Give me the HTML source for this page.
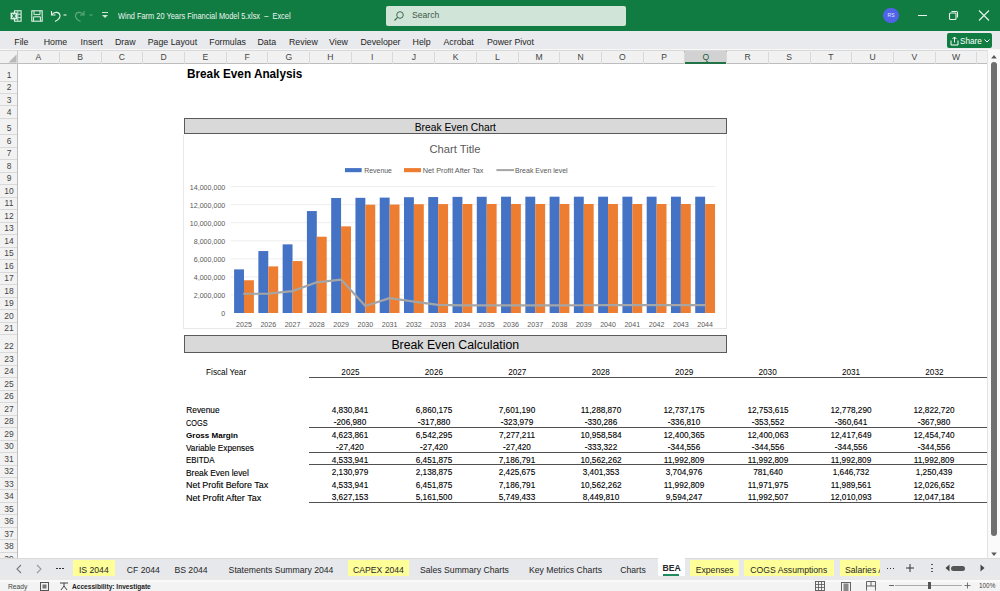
<!DOCTYPE html>
<html><head><meta charset="utf-8"><style>
html,body{margin:0;padding:0;width:1000px;height:591px;overflow:hidden;background:#fff}
body{position:relative;font-family:"Liberation Sans", sans-serif}
.b{position:absolute;display:block}
.t{position:absolute;white-space:nowrap;font-family:"Liberation Sans", sans-serif}
.sk{-webkit-text-stroke:0.12px currentColor}
</style></head><body>
<div class="b" style="left:0.00px;top:0.00px;width:1000.00px;height:31.00px;background:#107c41"></div>
<svg class="b" style="left:10px;top:9.8px" width="12" height="12" viewBox="0 0 12 12">
<rect x="4.5" y="0.8" width="6.6" height="10.4" fill="none" stroke="#dff0e5" stroke-width="1.1"/>
<line x1="7.8" y1="0.8" x2="7.8" y2="11.2" stroke="#dff0e5" stroke-width="0.9"/>
<line x1="7.8" y1="4.2" x2="11" y2="4.2" stroke="#dff0e5" stroke-width="0.9"/>
<line x1="7.8" y1="7.6" x2="11" y2="7.6" stroke="#dff0e5" stroke-width="0.9"/>
<rect x="0.6" y="2.6" width="6.6" height="6.8" fill="#dff0e5"/>
<path d="M2.4 4.2 L5.4 7.8 M5.4 4.2 L2.4 7.8" stroke="#137b45" stroke-width="1.1"/>
</svg>
<svg class="b" style="left:30.8px;top:9.6px" width="12" height="12" viewBox="0 0 12 12">
<rect x="0.8" y="0.8" width="10.4" height="10.4" fill="none" stroke="#dff0e5" stroke-width="1.1"/>
<path d="M3 0.8 V4.6 H9 V0.8" fill="none" stroke="#dff0e5" stroke-width="1"/>
<path d="M2.6 11.2 V6.8 H9.4 V11.2" fill="none" stroke="#dff0e5" stroke-width="1"/>
</svg>
<svg class="b" style="left:49px;top:9px" width="20" height="14" viewBox="0 0 20 14">
<path d="M2.5 2 L2.5 6 L6.5 6" fill="none" stroke="#e8f3ec" stroke-width="1.1"/>
<path d="M2.8 5.8 C5 2.5 10.5 2.5 11 6.5 C11.3 9 9 11 6 12.5" fill="none" stroke="#e8f3ec" stroke-width="1.1"/>
<line x1="14.5" y1="6" x2="17.5" y2="6" stroke="#e8f3ec" stroke-width="1.1"/>
</svg>
<svg class="b" style="left:74px;top:9px" width="22" height="14" viewBox="0 0 22 14">
<path d="M10 2 L10 6 L6 6" fill="none" stroke="#5fa97f" stroke-width="1.1"/>
<path d="M9.7 5.8 C7.5 2.5 2 2.5 1.5 6.5 C1.2 9 3.5 11 6.5 12.5" fill="none" stroke="#5fa97f" stroke-width="1.1"/>
<line x1="15.5" y1="6" x2="18.5" y2="6" stroke="#5fa97f" stroke-width="1.1"/>
</svg>
<svg class="b" style="left:100px;top:10px" width="10" height="10" viewBox="0 0 10 10">
<line x1="2" y1="2.5" x2="8" y2="2.5" stroke="#cfe5d8" stroke-width="1"/>
<path d="M2 5 L8 5 L5 8 Z" fill="#cfe5d8"/>
</svg>
<div class="t " style="left:117.50px;top:9.40px;height:16.40px;line-height:16.40px;font-size:8.20px;color:#eef6f1;font-weight:normal;transform:scaleX(0.905);transform-origin:left center;">Wind Farm 20 Years Financial Model 5.xlsx&nbsp;&nbsp;&ndash;&nbsp;&nbsp;Excel</div>
<div class="b" style="left:385.50px;top:5.70px;width:240.00px;height:20.30px;background:#d1e4d8;border-radius:2px"></div>
<svg class="b" style="left:393px;top:9.5px" width="12" height="12" viewBox="0 0 12 12">
<circle cx="7" cy="5" r="3.3" fill="none" stroke="#3d6a50" stroke-width="1"/>
<line x1="4.6" y1="7.4" x2="1.5" y2="10.5" stroke="#3d6a50" stroke-width="1.1"/>
</svg>
<div class="t " style="left:412.00px;top:6.90px;height:17.20px;line-height:17.20px;font-size:8.60px;color:#3d5a48;font-weight:normal;">Search</div>
<div class="b" style="left:883.2px;top:7.5px;width:15.6px;height:15.6px;border-radius:50%;background:#4f62e8"></div>
<div class="t " style="left:691.00px;width:400px;text-align:center;top:10.30px;height:10.00px;line-height:10.00px;font-size:5.00px;color:#e8ebff;font-weight:normal;">RS</div>
<div class="b" style="left:918.00px;top:14.80px;width:8.50px;height:1.00px;background:#e8f3ec"></div>
<svg class="b" style="left:948px;top:10px" width="11" height="11" viewBox="0 0 11 11">
<rect x="1.5" y="3" width="6.5" height="6.5" rx="1" fill="none" stroke="#e8f3ec" stroke-width="1.1"/>
<path d="M3.5 1.5 L8.5 1.5 Q9.5 1.5 9.5 2.5 L9.5 7.5" fill="none" stroke="#e8f3ec" stroke-width="1.1"/>
</svg>
<svg class="b" style="left:978px;top:10px" width="12" height="11" viewBox="0 0 12 11">
<path d="M1 0.5 L11 10.5 M11 0.5 L1 10.5" stroke="#e8f3ec" stroke-width="1.1"/>
</svg>
<div class="b" style="left:0.00px;top:31.00px;width:1000.00px;height:17.50px;background:#e8eaed"></div>
<div class="b" style="left:0.00px;top:48.50px;width:1000.00px;height:2.00px;background:#f7f7f8"></div>
<div class="t" style="left:14.30px;top:33.7px;height:17px;line-height:17px;font-size:8.8px;color:#262626">File</div>
<div class="t" style="left:43.70px;top:33.7px;height:17px;line-height:17px;font-size:8.8px;color:#262626">Home</div>
<div class="t" style="left:80.60px;top:33.7px;height:17px;line-height:17px;font-size:8.8px;color:#262626">Insert</div>
<div class="t" style="left:115.00px;top:33.7px;height:17px;line-height:17px;font-size:8.8px;color:#262626">Draw</div>
<div class="t" style="left:147.70px;top:33.7px;height:17px;line-height:17px;font-size:8.8px;color:#262626">Page Layout</div>
<div class="t" style="left:209.30px;top:33.7px;height:17px;line-height:17px;font-size:8.8px;color:#262626">Formulas</div>
<div class="t" style="left:257.50px;top:33.7px;height:17px;line-height:17px;font-size:8.8px;color:#262626">Data</div>
<div class="t" style="left:289.00px;top:33.7px;height:17px;line-height:17px;font-size:8.8px;color:#262626">Review</div>
<div class="t" style="left:329.00px;top:33.7px;height:17px;line-height:17px;font-size:8.8px;color:#262626">View</div>
<div class="t" style="left:360.40px;top:33.7px;height:17px;line-height:17px;font-size:8.8px;color:#262626">Developer</div>
<div class="t" style="left:412.60px;top:33.7px;height:17px;line-height:17px;font-size:8.8px;color:#262626">Help</div>
<div class="t" style="left:443.50px;top:33.7px;height:17px;line-height:17px;font-size:8.8px;color:#262626">Acrobat</div>
<div class="t" style="left:487.00px;top:33.7px;height:17px;line-height:17px;font-size:8.8px;color:#262626">Power Pivot</div>
<div class="b" style="left:946.70px;top:33.30px;width:45.50px;height:14.40px;background:#107c41;border-radius:2px"></div>
<svg class="b" style="left:950px;top:36px" width="9" height="10" viewBox="0 0 9 10">
<path d="M1 4.5 L1 9 L8 9 L8 4.5" fill="none" stroke="#fff" stroke-width="1"/>
<path d="M4.5 6.5 L4.5 1 M2.5 3 L4.5 1 L6.5 3" fill="none" stroke="#fff" stroke-width="1"/>
</svg>
<div class="t " style="left:960.00px;top:34.10px;height:16.40px;line-height:16.40px;font-size:8.20px;color:#fff;font-weight:normal;">Share</div>
<svg class="b" style="left:984px;top:39px" width="6" height="4" viewBox="0 0 6 4">
<path d="M0.5 0.5 L3 3 L5.5 0.5" fill="none" stroke="#fff" stroke-width="1"/>
</svg>
<div class="b" style="left:0.00px;top:50.50px;width:1000.00px;height:13.00px;background:#f1f1f1"></div>
<div class="b" style="left:0.00px;top:50.30px;width:987.00px;height:0.80px;background:#d9d9d9"></div>
<div class="b" style="left:0.00px;top:63.00px;width:987.00px;height:0.80px;background:#bdbdbd"></div>
<div class="b" style="left:684.96px;top:51.10px;width:41.71px;height:12.40px;background:#d2d2d2"></div>
<div class="b" style="left:684.96px;top:62.20px;width:41.71px;height:1.50px;background:#217346"></div>
<div class="b" style="left:684.46px;top:51.10px;width:0.90px;height:12.40px;background:#a8a8a8"></div>
<div class="b" style="left:726.17px;top:51.10px;width:0.90px;height:12.40px;background:#a8a8a8"></div>
<div class="b" style="left:58.81px;top:52.00px;width:0.80px;height:11.50px;background:#d8d8d8"></div>
<div class="t " style="left:-161.55px;width:400px;text-align:center;top:49.00px;height:17.20px;line-height:17.20px;font-size:8.60px;color:#444;font-weight:normal;">A</div>
<div class="b" style="left:100.52px;top:52.00px;width:0.80px;height:11.50px;background:#d8d8d8"></div>
<div class="t " style="left:-119.83px;width:400px;text-align:center;top:49.00px;height:17.20px;line-height:17.20px;font-size:8.60px;color:#444;font-weight:normal;">B</div>
<div class="b" style="left:142.23px;top:52.00px;width:0.80px;height:11.50px;background:#d8d8d8"></div>
<div class="t " style="left:-78.12px;width:400px;text-align:center;top:49.00px;height:17.20px;line-height:17.20px;font-size:8.60px;color:#444;font-weight:normal;">C</div>
<div class="b" style="left:183.94px;top:52.00px;width:0.80px;height:11.50px;background:#d8d8d8"></div>
<div class="t " style="left:-36.42px;width:400px;text-align:center;top:49.00px;height:17.20px;line-height:17.20px;font-size:8.60px;color:#444;font-weight:normal;">D</div>
<div class="b" style="left:225.65px;top:52.00px;width:0.80px;height:11.50px;background:#d8d8d8"></div>
<div class="t " style="left:5.29px;width:400px;text-align:center;top:49.00px;height:17.20px;line-height:17.20px;font-size:8.60px;color:#444;font-weight:normal;">E</div>
<div class="b" style="left:267.36px;top:52.00px;width:0.80px;height:11.50px;background:#d8d8d8"></div>
<div class="t " style="left:47.00px;width:400px;text-align:center;top:49.00px;height:17.20px;line-height:17.20px;font-size:8.60px;color:#444;font-weight:normal;">F</div>
<div class="b" style="left:309.07px;top:52.00px;width:0.80px;height:11.50px;background:#d8d8d8"></div>
<div class="t " style="left:88.72px;width:400px;text-align:center;top:49.00px;height:17.20px;line-height:17.20px;font-size:8.60px;color:#444;font-weight:normal;">G</div>
<div class="b" style="left:350.78px;top:52.00px;width:0.80px;height:11.50px;background:#d8d8d8"></div>
<div class="t " style="left:130.43px;width:400px;text-align:center;top:49.00px;height:17.20px;line-height:17.20px;font-size:8.60px;color:#444;font-weight:normal;">H</div>
<div class="b" style="left:392.49px;top:52.00px;width:0.80px;height:11.50px;background:#d8d8d8"></div>
<div class="t " style="left:172.14px;width:400px;text-align:center;top:49.00px;height:17.20px;line-height:17.20px;font-size:8.60px;color:#444;font-weight:normal;">I</div>
<div class="b" style="left:434.20px;top:52.00px;width:0.80px;height:11.50px;background:#d8d8d8"></div>
<div class="t " style="left:213.85px;width:400px;text-align:center;top:49.00px;height:17.20px;line-height:17.20px;font-size:8.60px;color:#444;font-weight:normal;">J</div>
<div class="b" style="left:475.91px;top:52.00px;width:0.80px;height:11.50px;background:#d8d8d8"></div>
<div class="t " style="left:255.56px;width:400px;text-align:center;top:49.00px;height:17.20px;line-height:17.20px;font-size:8.60px;color:#444;font-weight:normal;">K</div>
<div class="b" style="left:517.62px;top:52.00px;width:0.80px;height:11.50px;background:#d8d8d8"></div>
<div class="t " style="left:297.27px;width:400px;text-align:center;top:49.00px;height:17.20px;line-height:17.20px;font-size:8.60px;color:#444;font-weight:normal;">L</div>
<div class="b" style="left:559.33px;top:52.00px;width:0.80px;height:11.50px;background:#d8d8d8"></div>
<div class="t " style="left:338.98px;width:400px;text-align:center;top:49.00px;height:17.20px;line-height:17.20px;font-size:8.60px;color:#444;font-weight:normal;">M</div>
<div class="b" style="left:601.04px;top:52.00px;width:0.80px;height:11.50px;background:#d8d8d8"></div>
<div class="t " style="left:380.69px;width:400px;text-align:center;top:49.00px;height:17.20px;line-height:17.20px;font-size:8.60px;color:#444;font-weight:normal;">N</div>
<div class="b" style="left:642.75px;top:52.00px;width:0.80px;height:11.50px;background:#d8d8d8"></div>
<div class="t " style="left:422.40px;width:400px;text-align:center;top:49.00px;height:17.20px;line-height:17.20px;font-size:8.60px;color:#444;font-weight:normal;">O</div>
<div class="b" style="left:684.46px;top:52.00px;width:0.80px;height:11.50px;background:#d8d8d8"></div>
<div class="t " style="left:464.11px;width:400px;text-align:center;top:49.00px;height:17.20px;line-height:17.20px;font-size:8.60px;color:#444;font-weight:normal;">P</div>
<div class="b" style="left:726.17px;top:52.00px;width:0.80px;height:11.50px;background:#d8d8d8"></div>
<div class="t " style="left:505.82px;width:400px;text-align:center;top:49.00px;height:17.20px;line-height:17.20px;font-size:8.60px;color:#1f5c3a;font-weight:normal;">Q</div>
<div class="b" style="left:767.88px;top:52.00px;width:0.80px;height:11.50px;background:#d8d8d8"></div>
<div class="t " style="left:547.53px;width:400px;text-align:center;top:49.00px;height:17.20px;line-height:17.20px;font-size:8.60px;color:#444;font-weight:normal;">R</div>
<div class="b" style="left:809.59px;top:52.00px;width:0.80px;height:11.50px;background:#d8d8d8"></div>
<div class="t " style="left:589.24px;width:400px;text-align:center;top:49.00px;height:17.20px;line-height:17.20px;font-size:8.60px;color:#444;font-weight:normal;">S</div>
<div class="b" style="left:851.30px;top:52.00px;width:0.80px;height:11.50px;background:#d8d8d8"></div>
<div class="t " style="left:630.95px;width:400px;text-align:center;top:49.00px;height:17.20px;line-height:17.20px;font-size:8.60px;color:#444;font-weight:normal;">T</div>
<div class="b" style="left:893.01px;top:52.00px;width:0.80px;height:11.50px;background:#d8d8d8"></div>
<div class="t " style="left:672.66px;width:400px;text-align:center;top:49.00px;height:17.20px;line-height:17.20px;font-size:8.60px;color:#444;font-weight:normal;">U</div>
<div class="b" style="left:934.72px;top:52.00px;width:0.80px;height:11.50px;background:#d8d8d8"></div>
<div class="t " style="left:714.37px;width:400px;text-align:center;top:49.00px;height:17.20px;line-height:17.20px;font-size:8.60px;color:#444;font-weight:normal;">V</div>
<div class="b" style="left:976.43px;top:52.00px;width:0.80px;height:11.50px;background:#d8d8d8"></div>
<div class="t " style="left:756.08px;width:400px;text-align:center;top:49.00px;height:17.20px;line-height:17.20px;font-size:8.60px;color:#444;font-weight:normal;">W</div>
<div class="b" style="left:1018.14px;top:52.00px;width:0.80px;height:11.50px;background:#d8d8d8"></div>
<svg class="b" style="left:6.5px;top:53.5px" width="10" height="9" viewBox="0 0 10 9">
<path d="M9.5 0.5 L9.5 8.5 L1.5 8.5 Z" fill="#b8b8b8"/>
</svg>
<div class="b" style="left:17.20px;top:51.00px;width:0.80px;height:12.50px;background:#c8c8c8"></div>
<div class="b" style="left:0.00px;top:63.50px;width:17.60px;height:494.00px;background:#f2f2f2"></div>
<div class="b" style="left:17.20px;top:63.50px;width:0.80px;height:494.00px;background:#bdbdbd"></div>
<div class="b" style="left:0.00px;top:80.60px;width:17.20px;height:0.80px;background:#d9d9d9"></div>
<div class="t " style="left:-191.30px;width:400px;text-align:center;top:65.80px;height:18.80px;line-height:18.80px;font-size:9.40px;color:#444;font-weight:normal;transform:scaleX(0.9);transform-origin:center center;">1</div>
<div class="b" style="left:0.00px;top:93.00px;width:17.20px;height:0.80px;background:#d9d9d9"></div>
<div class="t " style="left:-191.30px;width:400px;text-align:center;top:78.20px;height:18.80px;line-height:18.80px;font-size:9.40px;color:#444;font-weight:normal;transform:scaleX(0.9);transform-origin:center center;">2</div>
<div class="b" style="left:0.00px;top:105.40px;width:17.20px;height:0.80px;background:#d9d9d9"></div>
<div class="t " style="left:-191.30px;width:400px;text-align:center;top:90.60px;height:18.80px;line-height:18.80px;font-size:9.40px;color:#444;font-weight:normal;transform:scaleX(0.9);transform-origin:center center;">3</div>
<div class="b" style="left:0.00px;top:117.80px;width:17.20px;height:0.80px;background:#d9d9d9"></div>
<div class="t " style="left:-191.30px;width:400px;text-align:center;top:103.00px;height:18.80px;line-height:18.80px;font-size:9.40px;color:#444;font-weight:normal;transform:scaleX(0.9);transform-origin:center center;">4</div>
<div class="b" style="left:0.00px;top:134.10px;width:17.20px;height:0.80px;background:#d9d9d9"></div>
<div class="t " style="left:-191.30px;width:400px;text-align:center;top:119.30px;height:18.80px;line-height:18.80px;font-size:9.40px;color:#444;font-weight:normal;transform:scaleX(0.9);transform-origin:center center;">5</div>
<div class="b" style="left:0.00px;top:146.60px;width:17.20px;height:0.80px;background:#d9d9d9"></div>
<div class="t " style="left:-191.30px;width:400px;text-align:center;top:131.80px;height:18.80px;line-height:18.80px;font-size:9.40px;color:#444;font-weight:normal;transform:scaleX(0.9);transform-origin:center center;">6</div>
<div class="b" style="left:0.00px;top:159.10px;width:17.20px;height:0.80px;background:#d9d9d9"></div>
<div class="t " style="left:-191.30px;width:400px;text-align:center;top:144.30px;height:18.80px;line-height:18.80px;font-size:9.40px;color:#444;font-weight:normal;transform:scaleX(0.9);transform-origin:center center;">7</div>
<div class="b" style="left:0.00px;top:171.60px;width:17.20px;height:0.80px;background:#d9d9d9"></div>
<div class="t " style="left:-191.30px;width:400px;text-align:center;top:156.80px;height:18.80px;line-height:18.80px;font-size:9.40px;color:#444;font-weight:normal;transform:scaleX(0.9);transform-origin:center center;">8</div>
<div class="b" style="left:0.00px;top:184.10px;width:17.20px;height:0.80px;background:#d9d9d9"></div>
<div class="t " style="left:-191.30px;width:400px;text-align:center;top:169.30px;height:18.80px;line-height:18.80px;font-size:9.40px;color:#444;font-weight:normal;transform:scaleX(0.9);transform-origin:center center;">9</div>
<div class="b" style="left:0.00px;top:196.60px;width:17.20px;height:0.80px;background:#d9d9d9"></div>
<div class="t " style="left:-191.30px;width:400px;text-align:center;top:181.80px;height:18.80px;line-height:18.80px;font-size:9.40px;color:#444;font-weight:normal;transform:scaleX(0.9);transform-origin:center center;">10</div>
<div class="b" style="left:0.00px;top:209.10px;width:17.20px;height:0.80px;background:#d9d9d9"></div>
<div class="t " style="left:-191.30px;width:400px;text-align:center;top:194.30px;height:18.80px;line-height:18.80px;font-size:9.40px;color:#444;font-weight:normal;transform:scaleX(0.9);transform-origin:center center;">11</div>
<div class="b" style="left:0.00px;top:221.60px;width:17.20px;height:0.80px;background:#d9d9d9"></div>
<div class="t " style="left:-191.30px;width:400px;text-align:center;top:206.80px;height:18.80px;line-height:18.80px;font-size:9.40px;color:#444;font-weight:normal;transform:scaleX(0.9);transform-origin:center center;">12</div>
<div class="b" style="left:0.00px;top:234.10px;width:17.20px;height:0.80px;background:#d9d9d9"></div>
<div class="t " style="left:-191.30px;width:400px;text-align:center;top:219.30px;height:18.80px;line-height:18.80px;font-size:9.40px;color:#444;font-weight:normal;transform:scaleX(0.9);transform-origin:center center;">13</div>
<div class="b" style="left:0.00px;top:246.60px;width:17.20px;height:0.80px;background:#d9d9d9"></div>
<div class="t " style="left:-191.30px;width:400px;text-align:center;top:231.80px;height:18.80px;line-height:18.80px;font-size:9.40px;color:#444;font-weight:normal;transform:scaleX(0.9);transform-origin:center center;">14</div>
<div class="b" style="left:0.00px;top:259.10px;width:17.20px;height:0.80px;background:#d9d9d9"></div>
<div class="t " style="left:-191.30px;width:400px;text-align:center;top:244.30px;height:18.80px;line-height:18.80px;font-size:9.40px;color:#444;font-weight:normal;transform:scaleX(0.9);transform-origin:center center;">15</div>
<div class="b" style="left:0.00px;top:271.60px;width:17.20px;height:0.80px;background:#d9d9d9"></div>
<div class="t " style="left:-191.30px;width:400px;text-align:center;top:256.80px;height:18.80px;line-height:18.80px;font-size:9.40px;color:#444;font-weight:normal;transform:scaleX(0.9);transform-origin:center center;">16</div>
<div class="b" style="left:0.00px;top:284.10px;width:17.20px;height:0.80px;background:#d9d9d9"></div>
<div class="t " style="left:-191.30px;width:400px;text-align:center;top:269.30px;height:18.80px;line-height:18.80px;font-size:9.40px;color:#444;font-weight:normal;transform:scaleX(0.9);transform-origin:center center;">17</div>
<div class="b" style="left:0.00px;top:296.60px;width:17.20px;height:0.80px;background:#d9d9d9"></div>
<div class="t " style="left:-191.30px;width:400px;text-align:center;top:281.80px;height:18.80px;line-height:18.80px;font-size:9.40px;color:#444;font-weight:normal;transform:scaleX(0.9);transform-origin:center center;">18</div>
<div class="b" style="left:0.00px;top:309.10px;width:17.20px;height:0.80px;background:#d9d9d9"></div>
<div class="t " style="left:-191.30px;width:400px;text-align:center;top:294.30px;height:18.80px;line-height:18.80px;font-size:9.40px;color:#444;font-weight:normal;transform:scaleX(0.9);transform-origin:center center;">19</div>
<div class="b" style="left:0.00px;top:321.60px;width:17.20px;height:0.80px;background:#d9d9d9"></div>
<div class="t " style="left:-191.30px;width:400px;text-align:center;top:306.80px;height:18.80px;line-height:18.80px;font-size:9.40px;color:#444;font-weight:normal;transform:scaleX(0.9);transform-origin:center center;">20</div>
<div class="b" style="left:0.00px;top:334.10px;width:17.20px;height:0.80px;background:#d9d9d9"></div>
<div class="t " style="left:-191.30px;width:400px;text-align:center;top:319.30px;height:18.80px;line-height:18.80px;font-size:9.40px;color:#444;font-weight:normal;transform:scaleX(0.9);transform-origin:center center;">21</div>
<div class="b" style="left:0.00px;top:352.10px;width:17.20px;height:0.80px;background:#d9d9d9"></div>
<div class="t " style="left:-191.30px;width:400px;text-align:center;top:337.30px;height:18.80px;line-height:18.80px;font-size:9.40px;color:#444;font-weight:normal;transform:scaleX(0.9);transform-origin:center center;">22</div>
<div class="b" style="left:0.00px;top:364.59px;width:17.20px;height:0.80px;background:#d9d9d9"></div>
<div class="t " style="left:-191.30px;width:400px;text-align:center;top:349.79px;height:18.80px;line-height:18.80px;font-size:9.40px;color:#444;font-weight:normal;transform:scaleX(0.9);transform-origin:center center;">23</div>
<div class="b" style="left:0.00px;top:377.08px;width:17.20px;height:0.80px;background:#d9d9d9"></div>
<div class="t " style="left:-191.30px;width:400px;text-align:center;top:362.28px;height:18.80px;line-height:18.80px;font-size:9.40px;color:#444;font-weight:normal;transform:scaleX(0.9);transform-origin:center center;">24</div>
<div class="b" style="left:0.00px;top:389.57px;width:17.20px;height:0.80px;background:#d9d9d9"></div>
<div class="t " style="left:-191.30px;width:400px;text-align:center;top:374.77px;height:18.80px;line-height:18.80px;font-size:9.40px;color:#444;font-weight:normal;transform:scaleX(0.9);transform-origin:center center;">25</div>
<div class="b" style="left:0.00px;top:402.06px;width:17.20px;height:0.80px;background:#d9d9d9"></div>
<div class="t " style="left:-191.30px;width:400px;text-align:center;top:387.26px;height:18.80px;line-height:18.80px;font-size:9.40px;color:#444;font-weight:normal;transform:scaleX(0.9);transform-origin:center center;">26</div>
<div class="b" style="left:0.00px;top:414.55px;width:17.20px;height:0.80px;background:#d9d9d9"></div>
<div class="t " style="left:-191.30px;width:400px;text-align:center;top:399.75px;height:18.80px;line-height:18.80px;font-size:9.40px;color:#444;font-weight:normal;transform:scaleX(0.9);transform-origin:center center;">27</div>
<div class="b" style="left:0.00px;top:427.04px;width:17.20px;height:0.80px;background:#d9d9d9"></div>
<div class="t " style="left:-191.30px;width:400px;text-align:center;top:412.24px;height:18.80px;line-height:18.80px;font-size:9.40px;color:#444;font-weight:normal;transform:scaleX(0.9);transform-origin:center center;">28</div>
<div class="b" style="left:0.00px;top:439.53px;width:17.20px;height:0.80px;background:#d9d9d9"></div>
<div class="t " style="left:-191.30px;width:400px;text-align:center;top:424.73px;height:18.80px;line-height:18.80px;font-size:9.40px;color:#444;font-weight:normal;transform:scaleX(0.9);transform-origin:center center;">29</div>
<div class="b" style="left:0.00px;top:452.02px;width:17.20px;height:0.80px;background:#d9d9d9"></div>
<div class="t " style="left:-191.30px;width:400px;text-align:center;top:437.22px;height:18.80px;line-height:18.80px;font-size:9.40px;color:#444;font-weight:normal;transform:scaleX(0.9);transform-origin:center center;">30</div>
<div class="b" style="left:0.00px;top:464.51px;width:17.20px;height:0.80px;background:#d9d9d9"></div>
<div class="t " style="left:-191.30px;width:400px;text-align:center;top:449.71px;height:18.80px;line-height:18.80px;font-size:9.40px;color:#444;font-weight:normal;transform:scaleX(0.9);transform-origin:center center;">31</div>
<div class="b" style="left:0.00px;top:477.00px;width:17.20px;height:0.80px;background:#d9d9d9"></div>
<div class="t " style="left:-191.30px;width:400px;text-align:center;top:462.20px;height:18.80px;line-height:18.80px;font-size:9.40px;color:#444;font-weight:normal;transform:scaleX(0.9);transform-origin:center center;">32</div>
<div class="b" style="left:0.00px;top:489.49px;width:17.20px;height:0.80px;background:#d9d9d9"></div>
<div class="t " style="left:-191.30px;width:400px;text-align:center;top:474.69px;height:18.80px;line-height:18.80px;font-size:9.40px;color:#444;font-weight:normal;transform:scaleX(0.9);transform-origin:center center;">33</div>
<div class="b" style="left:0.00px;top:501.98px;width:17.20px;height:0.80px;background:#d9d9d9"></div>
<div class="t " style="left:-191.30px;width:400px;text-align:center;top:487.18px;height:18.80px;line-height:18.80px;font-size:9.40px;color:#444;font-weight:normal;transform:scaleX(0.9);transform-origin:center center;">34</div>
<div class="b" style="left:0.00px;top:514.47px;width:17.20px;height:0.80px;background:#d9d9d9"></div>
<div class="t " style="left:-191.30px;width:400px;text-align:center;top:499.67px;height:18.80px;line-height:18.80px;font-size:9.40px;color:#444;font-weight:normal;transform:scaleX(0.9);transform-origin:center center;">35</div>
<div class="b" style="left:0.00px;top:526.96px;width:17.20px;height:0.80px;background:#d9d9d9"></div>
<div class="t " style="left:-191.30px;width:400px;text-align:center;top:512.16px;height:18.80px;line-height:18.80px;font-size:9.40px;color:#444;font-weight:normal;transform:scaleX(0.9);transform-origin:center center;">36</div>
<div class="b" style="left:0.00px;top:539.45px;width:17.20px;height:0.80px;background:#d9d9d9"></div>
<div class="t " style="left:-191.30px;width:400px;text-align:center;top:524.65px;height:18.80px;line-height:18.80px;font-size:9.40px;color:#444;font-weight:normal;transform:scaleX(0.9);transform-origin:center center;">37</div>
<div class="b" style="left:0.00px;top:551.94px;width:17.20px;height:0.80px;background:#d9d9d9"></div>
<div class="t " style="left:-191.30px;width:400px;text-align:center;top:537.14px;height:18.80px;line-height:18.80px;font-size:9.40px;color:#444;font-weight:normal;transform:scaleX(0.9);transform-origin:center center;">38</div>
<div class="t " style="left:-191.30px;width:400px;text-align:center;top:549.63px;height:18.80px;line-height:18.80px;font-size:9.40px;color:#444;font-weight:normal;transform:scaleX(0.9);transform-origin:center center;">39</div>
<div class="b" style="left:18.00px;top:63.80px;width:969.00px;height:493.70px;background:#fff"></div>
<div class="t " style="left:187.00px;top:62.10px;height:24.00px;line-height:24.00px;font-size:12.00px;color:#000;font-weight:bold;transform:scaleX(0.98);transform-origin:left center;">Break Even Analysis</div>
<div class="b" style="left:184.44px;top:118.20px;width:542.23px;height:16.30px;background:#d9d9d9;border:1px solid #5a5a5a;box-sizing:border-box"></div>
<div class="t " style="left:255.30px;width:400px;text-align:center;top:117.70px;height:20.60px;line-height:20.60px;font-size:10.30px;color:#000;font-weight:normal;">Break Even Chart</div>
<div class="b" style="left:183.24px;top:134.50px;width:544.03px;height:194.50px;background:#fff;border:1px solid #e8e8e8;border-top:none;box-sizing:border-box"></div>
<div class="b" style="left:184.44px;top:334.50px;width:542.23px;height:18.00px;background:#d9d9d9;border:1px solid #5a5a5a;box-sizing:border-box"></div>
<div class="t " style="left:255.30px;width:400px;text-align:center;top:333.10px;height:24.60px;line-height:24.60px;font-size:12.30px;color:#000;font-weight:normal;">Break Even Calculation</div>
<svg class="b" style="left:0;top:0" width="1000" height="591" viewBox="0 0 1000 591">
<text x="225.3" y="316.10" text-anchor="end" font-size="7.1" fill="#595959" font-family="Liberation Sans">0</text>
<line x1="230.5" y1="294.94" x2="715.5" y2="294.94" stroke="#ececec" stroke-width="0.9"/>
<text x="225.3" y="298.04" text-anchor="end" font-size="7.1" fill="#595959" font-family="Liberation Sans">2,000,000</text>
<line x1="230.5" y1="276.88" x2="715.5" y2="276.88" stroke="#ececec" stroke-width="0.9"/>
<text x="225.3" y="279.98" text-anchor="end" font-size="7.1" fill="#595959" font-family="Liberation Sans">4,000,000</text>
<line x1="230.5" y1="258.82" x2="715.5" y2="258.82" stroke="#ececec" stroke-width="0.9"/>
<text x="225.3" y="261.92" text-anchor="end" font-size="7.1" fill="#595959" font-family="Liberation Sans">6,000,000</text>
<line x1="230.5" y1="240.76" x2="715.5" y2="240.76" stroke="#ececec" stroke-width="0.9"/>
<text x="225.3" y="243.86" text-anchor="end" font-size="7.1" fill="#595959" font-family="Liberation Sans">8,000,000</text>
<line x1="230.5" y1="222.70" x2="715.5" y2="222.70" stroke="#ececec" stroke-width="0.9"/>
<text x="225.3" y="225.80" text-anchor="end" font-size="7.1" fill="#595959" font-family="Liberation Sans">10,000,000</text>
<line x1="230.5" y1="204.64" x2="715.5" y2="204.64" stroke="#ececec" stroke-width="0.9"/>
<text x="225.3" y="207.74" text-anchor="end" font-size="7.1" fill="#595959" font-family="Liberation Sans">12,000,000</text>
<line x1="230.5" y1="186.58" x2="715.5" y2="186.58" stroke="#ececec" stroke-width="0.9"/>
<text x="225.3" y="189.68" text-anchor="end" font-size="7.1" fill="#595959" font-family="Liberation Sans">14,000,000</text>
<rect x="234.10" y="269.38" width="9.90" height="43.62" fill="#4472c4"/>
<rect x="244.00" y="280.25" width="9.90" height="32.75" fill="#ed7d31"/>
<text x="244.00" y="326.90" text-anchor="middle" font-size="7.1" fill="#595959" font-family="Liberation Sans">2025</text>
<rect x="258.37" y="251.05" width="9.90" height="61.95" fill="#4472c4"/>
<rect x="268.27" y="266.39" width="9.90" height="46.61" fill="#ed7d31"/>
<text x="268.27" y="326.90" text-anchor="middle" font-size="7.1" fill="#595959" font-family="Liberation Sans">2026</text>
<rect x="282.64" y="244.36" width="9.90" height="68.64" fill="#4472c4"/>
<rect x="292.54" y="261.08" width="9.90" height="51.92" fill="#ed7d31"/>
<text x="292.54" y="326.90" text-anchor="middle" font-size="7.1" fill="#595959" font-family="Liberation Sans">2027</text>
<rect x="306.91" y="211.06" width="9.90" height="101.94" fill="#4472c4"/>
<rect x="316.81" y="236.70" width="9.90" height="76.30" fill="#ed7d31"/>
<text x="316.81" y="326.90" text-anchor="middle" font-size="7.1" fill="#595959" font-family="Liberation Sans">2028</text>
<rect x="331.18" y="197.98" width="9.90" height="115.02" fill="#4472c4"/>
<rect x="341.08" y="226.36" width="9.90" height="86.64" fill="#ed7d31"/>
<text x="341.08" y="326.90" text-anchor="middle" font-size="7.1" fill="#595959" font-family="Liberation Sans">2029</text>
<rect x="355.45" y="197.83" width="9.90" height="115.17" fill="#4472c4"/>
<rect x="365.35" y="204.71" width="9.90" height="108.29" fill="#ed7d31"/>
<text x="365.35" y="326.90" text-anchor="middle" font-size="7.1" fill="#595959" font-family="Liberation Sans">2030</text>
<rect x="379.72" y="197.61" width="9.90" height="115.39" fill="#4472c4"/>
<rect x="389.62" y="204.55" width="9.90" height="108.45" fill="#ed7d31"/>
<text x="389.62" y="326.90" text-anchor="middle" font-size="7.1" fill="#595959" font-family="Liberation Sans">2031</text>
<rect x="403.99" y="197.21" width="9.90" height="115.79" fill="#4472c4"/>
<rect x="413.89" y="204.21" width="9.90" height="108.79" fill="#ed7d31"/>
<text x="413.89" y="326.90" text-anchor="middle" font-size="7.1" fill="#595959" font-family="Liberation Sans">2032</text>
<rect x="428.26" y="197.05" width="9.90" height="115.95" fill="#4472c4"/>
<rect x="438.16" y="204.10" width="9.90" height="108.90" fill="#ed7d31"/>
<text x="438.16" y="326.90" text-anchor="middle" font-size="7.1" fill="#595959" font-family="Liberation Sans">2033</text>
<rect x="452.53" y="196.87" width="9.90" height="116.13" fill="#4472c4"/>
<rect x="462.43" y="204.01" width="9.90" height="108.99" fill="#ed7d31"/>
<text x="462.43" y="326.90" text-anchor="middle" font-size="7.1" fill="#595959" font-family="Liberation Sans">2034</text>
<rect x="476.80" y="196.78" width="9.90" height="116.22" fill="#4472c4"/>
<rect x="486.70" y="204.01" width="9.90" height="108.99" fill="#ed7d31"/>
<text x="486.70" y="326.90" text-anchor="middle" font-size="7.1" fill="#595959" font-family="Liberation Sans">2035</text>
<rect x="501.07" y="196.69" width="9.90" height="116.31" fill="#4472c4"/>
<rect x="510.97" y="204.01" width="9.90" height="108.99" fill="#ed7d31"/>
<text x="510.97" y="326.90" text-anchor="middle" font-size="7.1" fill="#595959" font-family="Liberation Sans">2036</text>
<rect x="525.34" y="196.69" width="9.90" height="116.31" fill="#4472c4"/>
<rect x="535.24" y="204.01" width="9.90" height="108.99" fill="#ed7d31"/>
<text x="535.24" y="326.90" text-anchor="middle" font-size="7.1" fill="#595959" font-family="Liberation Sans">2037</text>
<rect x="549.61" y="196.69" width="9.90" height="116.31" fill="#4472c4"/>
<rect x="559.51" y="204.01" width="9.90" height="108.99" fill="#ed7d31"/>
<text x="559.51" y="326.90" text-anchor="middle" font-size="7.1" fill="#595959" font-family="Liberation Sans">2038</text>
<rect x="573.88" y="196.69" width="9.90" height="116.31" fill="#4472c4"/>
<rect x="583.78" y="204.01" width="9.90" height="108.99" fill="#ed7d31"/>
<text x="583.78" y="326.90" text-anchor="middle" font-size="7.1" fill="#595959" font-family="Liberation Sans">2039</text>
<rect x="598.15" y="196.69" width="9.90" height="116.31" fill="#4472c4"/>
<rect x="608.05" y="204.01" width="9.90" height="108.99" fill="#ed7d31"/>
<text x="608.05" y="326.90" text-anchor="middle" font-size="7.1" fill="#595959" font-family="Liberation Sans">2040</text>
<rect x="622.42" y="196.69" width="9.90" height="116.31" fill="#4472c4"/>
<rect x="632.32" y="204.01" width="9.90" height="108.99" fill="#ed7d31"/>
<text x="632.32" y="326.90" text-anchor="middle" font-size="7.1" fill="#595959" font-family="Liberation Sans">2041</text>
<rect x="646.69" y="196.69" width="9.90" height="116.31" fill="#4472c4"/>
<rect x="656.59" y="204.01" width="9.90" height="108.99" fill="#ed7d31"/>
<text x="656.59" y="326.90" text-anchor="middle" font-size="7.1" fill="#595959" font-family="Liberation Sans">2042</text>
<rect x="670.96" y="196.69" width="9.90" height="116.31" fill="#4472c4"/>
<rect x="680.86" y="204.01" width="9.90" height="108.99" fill="#ed7d31"/>
<text x="680.86" y="326.90" text-anchor="middle" font-size="7.1" fill="#595959" font-family="Liberation Sans">2043</text>
<rect x="695.23" y="196.69" width="9.90" height="116.31" fill="#4472c4"/>
<rect x="705.13" y="204.01" width="9.90" height="108.99" fill="#ed7d31"/>
<text x="705.13" y="326.90" text-anchor="middle" font-size="7.1" fill="#595959" font-family="Liberation Sans">2044</text>
<path d="M244.00 293.76 L268.27 293.69 L292.54 291.10 L316.81 282.29 L341.08 279.54 L365.35 305.94 L389.62 298.13 L413.89 301.71 L438.16 304.87 L462.43 305.32 L486.70 305.32 L510.97 305.32 L535.24 305.32 L559.51 305.32 L583.78 305.23 L608.05 305.14 L632.32 305.05 L656.59 305.05 L680.86 305.05 L705.13 305.05" fill="none" stroke="#a5a5a5" stroke-width="2.2" stroke-linecap="round" stroke-linejoin="round"/>
<text x="455" y="153.4" text-anchor="middle" font-size="11.2" fill="#595959" font-family="Liberation Sans">Chart Title</text>
<rect x="345" y="168.1" width="16.7" height="4.1" fill="#4472c4"/>
<text x="364.3" y="172.7" font-size="6.9" fill="#595959" font-family="Liberation Sans">Revenue</text>
<rect x="404" y="168.1" width="17" height="4.1" fill="#ed7d31"/>
<text x="422.8" y="172.7" font-size="7.3" fill="#595959" font-family="Liberation Sans">Net Profit After Tax</text>
<line x1="496.4" y1="170.1" x2="514" y2="170.1" stroke="#a5a5a5" stroke-width="2"/>
<text x="515.1" y="172.7" font-size="7" fill="#595959" font-family="Liberation Sans">Break Even level</text>
</svg>
<div class="t " style="left:206.10px;top:364.99px;height:16.40px;line-height:16.40px;font-size:8.20px;color:#000;font-weight:normal;">Fiscal Year</div>
<div class="t " style="left:150.48px;width:400px;text-align:center;top:364.99px;height:16.40px;line-height:16.40px;font-size:8.20px;color:#000;font-weight:normal;">2025</div>
<div class="t " style="left:233.90px;width:400px;text-align:center;top:364.99px;height:16.40px;line-height:16.40px;font-size:8.20px;color:#000;font-weight:normal;">2026</div>
<div class="t " style="left:317.32px;width:400px;text-align:center;top:364.99px;height:16.40px;line-height:16.40px;font-size:8.20px;color:#000;font-weight:normal;">2027</div>
<div class="t " style="left:400.74px;width:400px;text-align:center;top:364.99px;height:16.40px;line-height:16.40px;font-size:8.20px;color:#000;font-weight:normal;">2028</div>
<div class="t " style="left:484.16px;width:400px;text-align:center;top:364.99px;height:16.40px;line-height:16.40px;font-size:8.20px;color:#000;font-weight:normal;">2029</div>
<div class="t " style="left:567.58px;width:400px;text-align:center;top:364.99px;height:16.40px;line-height:16.40px;font-size:8.20px;color:#000;font-weight:normal;">2030</div>
<div class="t " style="left:651.00px;width:400px;text-align:center;top:364.99px;height:16.40px;line-height:16.40px;font-size:8.20px;color:#000;font-weight:normal;">2031</div>
<div class="t " style="left:734.42px;width:400px;text-align:center;top:364.99px;height:16.40px;line-height:16.40px;font-size:8.20px;color:#000;font-weight:normal;">2032</div>
<div class="t sk" style="left:186.30px;top:402.30px;height:16.60px;line-height:16.60px;font-size:8.30px;color:#000;font-weight:normal;transform:scaleX(1.0);transform-origin:left center;">Revenue</div>
<div class="t sk" style="left:150.48px;width:400px;text-align:center;top:402.00px;height:17.20px;line-height:17.20px;font-size:8.60px;color:#000;font-weight:normal;transform:scaleX(0.955);transform-origin:center center;">4,830,841</div>
<div class="t sk" style="left:233.90px;width:400px;text-align:center;top:402.00px;height:17.20px;line-height:17.20px;font-size:8.60px;color:#000;font-weight:normal;transform:scaleX(0.955);transform-origin:center center;">6,860,175</div>
<div class="t sk" style="left:317.32px;width:400px;text-align:center;top:402.00px;height:17.20px;line-height:17.20px;font-size:8.60px;color:#000;font-weight:normal;transform:scaleX(0.955);transform-origin:center center;">7,601,190</div>
<div class="t sk" style="left:400.74px;width:400px;text-align:center;top:402.00px;height:17.20px;line-height:17.20px;font-size:8.60px;color:#000;font-weight:normal;transform:scaleX(0.955);transform-origin:center center;">11,288,870</div>
<div class="t sk" style="left:484.16px;width:400px;text-align:center;top:402.00px;height:17.20px;line-height:17.20px;font-size:8.60px;color:#000;font-weight:normal;transform:scaleX(0.955);transform-origin:center center;">12,737,175</div>
<div class="t sk" style="left:567.58px;width:400px;text-align:center;top:402.00px;height:17.20px;line-height:17.20px;font-size:8.60px;color:#000;font-weight:normal;transform:scaleX(0.955);transform-origin:center center;">12,753,615</div>
<div class="t sk" style="left:651.00px;width:400px;text-align:center;top:402.00px;height:17.20px;line-height:17.20px;font-size:8.60px;color:#000;font-weight:normal;transform:scaleX(0.955);transform-origin:center center;">12,778,290</div>
<div class="t sk" style="left:734.42px;width:400px;text-align:center;top:402.00px;height:17.20px;line-height:17.20px;font-size:8.60px;color:#000;font-weight:normal;transform:scaleX(0.955);transform-origin:center center;">12,822,720</div>
<div class="t sk" style="left:186.30px;top:414.77px;height:16.60px;line-height:16.60px;font-size:8.30px;color:#000;font-weight:normal;transform:scaleX(0.88);transform-origin:left center;">COGS</div>
<div class="t sk" style="left:150.48px;width:400px;text-align:center;top:414.47px;height:17.20px;line-height:17.20px;font-size:8.60px;color:#000;font-weight:normal;transform:scaleX(0.955);transform-origin:center center;">-206,980</div>
<div class="t sk" style="left:233.90px;width:400px;text-align:center;top:414.47px;height:17.20px;line-height:17.20px;font-size:8.60px;color:#000;font-weight:normal;transform:scaleX(0.955);transform-origin:center center;">-317,880</div>
<div class="t sk" style="left:317.32px;width:400px;text-align:center;top:414.47px;height:17.20px;line-height:17.20px;font-size:8.60px;color:#000;font-weight:normal;transform:scaleX(0.955);transform-origin:center center;">-323,979</div>
<div class="t sk" style="left:400.74px;width:400px;text-align:center;top:414.47px;height:17.20px;line-height:17.20px;font-size:8.60px;color:#000;font-weight:normal;transform:scaleX(0.955);transform-origin:center center;">-330,286</div>
<div class="t sk" style="left:484.16px;width:400px;text-align:center;top:414.47px;height:17.20px;line-height:17.20px;font-size:8.60px;color:#000;font-weight:normal;transform:scaleX(0.955);transform-origin:center center;">-336,810</div>
<div class="t sk" style="left:567.58px;width:400px;text-align:center;top:414.47px;height:17.20px;line-height:17.20px;font-size:8.60px;color:#000;font-weight:normal;transform:scaleX(0.955);transform-origin:center center;">-353,552</div>
<div class="t sk" style="left:651.00px;width:400px;text-align:center;top:414.47px;height:17.20px;line-height:17.20px;font-size:8.60px;color:#000;font-weight:normal;transform:scaleX(0.955);transform-origin:center center;">-360,641</div>
<div class="t sk" style="left:734.42px;width:400px;text-align:center;top:414.47px;height:17.20px;line-height:17.20px;font-size:8.60px;color:#000;font-weight:normal;transform:scaleX(0.955);transform-origin:center center;">-367,980</div>
<div class="t " style="left:186.30px;top:427.64px;height:15.80px;line-height:15.80px;font-size:7.90px;color:#000;font-weight:bold;transform:scaleX(1.02);transform-origin:left center;">Gross Margin</div>
<div class="t sk" style="left:150.48px;width:400px;text-align:center;top:426.94px;height:17.20px;line-height:17.20px;font-size:8.60px;color:#000;font-weight:normal;transform:scaleX(0.955);transform-origin:center center;">4,623,861</div>
<div class="t sk" style="left:233.90px;width:400px;text-align:center;top:426.94px;height:17.20px;line-height:17.20px;font-size:8.60px;color:#000;font-weight:normal;transform:scaleX(0.955);transform-origin:center center;">6,542,295</div>
<div class="t sk" style="left:317.32px;width:400px;text-align:center;top:426.94px;height:17.20px;line-height:17.20px;font-size:8.60px;color:#000;font-weight:normal;transform:scaleX(0.955);transform-origin:center center;">7,277,211</div>
<div class="t sk" style="left:400.74px;width:400px;text-align:center;top:426.94px;height:17.20px;line-height:17.20px;font-size:8.60px;color:#000;font-weight:normal;transform:scaleX(0.955);transform-origin:center center;">10,958,584</div>
<div class="t sk" style="left:484.16px;width:400px;text-align:center;top:426.94px;height:17.20px;line-height:17.20px;font-size:8.60px;color:#000;font-weight:normal;transform:scaleX(0.955);transform-origin:center center;">12,400,365</div>
<div class="t sk" style="left:567.58px;width:400px;text-align:center;top:426.94px;height:17.20px;line-height:17.20px;font-size:8.60px;color:#000;font-weight:normal;transform:scaleX(0.955);transform-origin:center center;">12,400,063</div>
<div class="t sk" style="left:651.00px;width:400px;text-align:center;top:426.94px;height:17.20px;line-height:17.20px;font-size:8.60px;color:#000;font-weight:normal;transform:scaleX(0.955);transform-origin:center center;">12,417,649</div>
<div class="t sk" style="left:734.42px;width:400px;text-align:center;top:426.94px;height:17.20px;line-height:17.20px;font-size:8.60px;color:#000;font-weight:normal;transform:scaleX(0.955);transform-origin:center center;">12,454,740</div>
<div class="t sk" style="left:186.30px;top:439.71px;height:16.60px;line-height:16.60px;font-size:8.30px;color:#000;font-weight:normal;transform:scaleX(0.99);transform-origin:left center;">Variable Expenses</div>
<div class="t sk" style="left:150.48px;width:400px;text-align:center;top:439.41px;height:17.20px;line-height:17.20px;font-size:8.60px;color:#000;font-weight:normal;transform:scaleX(0.955);transform-origin:center center;">-27,420</div>
<div class="t sk" style="left:233.90px;width:400px;text-align:center;top:439.41px;height:17.20px;line-height:17.20px;font-size:8.60px;color:#000;font-weight:normal;transform:scaleX(0.955);transform-origin:center center;">-27,420</div>
<div class="t sk" style="left:317.32px;width:400px;text-align:center;top:439.41px;height:17.20px;line-height:17.20px;font-size:8.60px;color:#000;font-weight:normal;transform:scaleX(0.955);transform-origin:center center;">-27,420</div>
<div class="t sk" style="left:400.74px;width:400px;text-align:center;top:439.41px;height:17.20px;line-height:17.20px;font-size:8.60px;color:#000;font-weight:normal;transform:scaleX(0.955);transform-origin:center center;">-333,322</div>
<div class="t sk" style="left:484.16px;width:400px;text-align:center;top:439.41px;height:17.20px;line-height:17.20px;font-size:8.60px;color:#000;font-weight:normal;transform:scaleX(0.955);transform-origin:center center;">-344,556</div>
<div class="t sk" style="left:567.58px;width:400px;text-align:center;top:439.41px;height:17.20px;line-height:17.20px;font-size:8.60px;color:#000;font-weight:normal;transform:scaleX(0.955);transform-origin:center center;">-344,556</div>
<div class="t sk" style="left:651.00px;width:400px;text-align:center;top:439.41px;height:17.20px;line-height:17.20px;font-size:8.60px;color:#000;font-weight:normal;transform:scaleX(0.955);transform-origin:center center;">-344,556</div>
<div class="t sk" style="left:734.42px;width:400px;text-align:center;top:439.41px;height:17.20px;line-height:17.20px;font-size:8.60px;color:#000;font-weight:normal;transform:scaleX(0.955);transform-origin:center center;">-344,556</div>
<div class="t sk" style="left:186.30px;top:452.18px;height:16.60px;line-height:16.60px;font-size:8.30px;color:#000;font-weight:normal;transform:scaleX(0.955);transform-origin:left center;">EBITDA</div>
<div class="t sk" style="left:150.48px;width:400px;text-align:center;top:451.88px;height:17.20px;line-height:17.20px;font-size:8.60px;color:#000;font-weight:normal;transform:scaleX(0.955);transform-origin:center center;">4,533,941</div>
<div class="t sk" style="left:233.90px;width:400px;text-align:center;top:451.88px;height:17.20px;line-height:17.20px;font-size:8.60px;color:#000;font-weight:normal;transform:scaleX(0.955);transform-origin:center center;">6,451,875</div>
<div class="t sk" style="left:317.32px;width:400px;text-align:center;top:451.88px;height:17.20px;line-height:17.20px;font-size:8.60px;color:#000;font-weight:normal;transform:scaleX(0.955);transform-origin:center center;">7,186,791</div>
<div class="t sk" style="left:400.74px;width:400px;text-align:center;top:451.88px;height:17.20px;line-height:17.20px;font-size:8.60px;color:#000;font-weight:normal;transform:scaleX(0.955);transform-origin:center center;">10,562,262</div>
<div class="t sk" style="left:484.16px;width:400px;text-align:center;top:451.88px;height:17.20px;line-height:17.20px;font-size:8.60px;color:#000;font-weight:normal;transform:scaleX(0.955);transform-origin:center center;">11,992,809</div>
<div class="t sk" style="left:567.58px;width:400px;text-align:center;top:451.88px;height:17.20px;line-height:17.20px;font-size:8.60px;color:#000;font-weight:normal;transform:scaleX(0.955);transform-origin:center center;">11,992,809</div>
<div class="t sk" style="left:651.00px;width:400px;text-align:center;top:451.88px;height:17.20px;line-height:17.20px;font-size:8.60px;color:#000;font-weight:normal;transform:scaleX(0.955);transform-origin:center center;">11,992,809</div>
<div class="t sk" style="left:734.42px;width:400px;text-align:center;top:451.88px;height:17.20px;line-height:17.20px;font-size:8.60px;color:#000;font-weight:normal;transform:scaleX(0.955);transform-origin:center center;">11,992,809</div>
<div class="t sk" style="left:186.30px;top:464.65px;height:16.60px;line-height:16.60px;font-size:8.30px;color:#000;font-weight:normal;transform:scaleX(1.01);transform-origin:left center;">Break Even level</div>
<div class="t sk" style="left:150.48px;width:400px;text-align:center;top:464.35px;height:17.20px;line-height:17.20px;font-size:8.60px;color:#000;font-weight:normal;transform:scaleX(0.955);transform-origin:center center;">2,130,979</div>
<div class="t sk" style="left:233.90px;width:400px;text-align:center;top:464.35px;height:17.20px;line-height:17.20px;font-size:8.60px;color:#000;font-weight:normal;transform:scaleX(0.955);transform-origin:center center;">2,138,875</div>
<div class="t sk" style="left:317.32px;width:400px;text-align:center;top:464.35px;height:17.20px;line-height:17.20px;font-size:8.60px;color:#000;font-weight:normal;transform:scaleX(0.955);transform-origin:center center;">2,425,675</div>
<div class="t sk" style="left:400.74px;width:400px;text-align:center;top:464.35px;height:17.20px;line-height:17.20px;font-size:8.60px;color:#000;font-weight:normal;transform:scaleX(0.955);transform-origin:center center;">3,401,353</div>
<div class="t sk" style="left:484.16px;width:400px;text-align:center;top:464.35px;height:17.20px;line-height:17.20px;font-size:8.60px;color:#000;font-weight:normal;transform:scaleX(0.955);transform-origin:center center;">3,704,976</div>
<div class="t sk" style="left:567.58px;width:400px;text-align:center;top:464.35px;height:17.20px;line-height:17.20px;font-size:8.60px;color:#000;font-weight:normal;transform:scaleX(0.955);transform-origin:center center;">781,640</div>
<div class="t sk" style="left:651.00px;width:400px;text-align:center;top:464.35px;height:17.20px;line-height:17.20px;font-size:8.60px;color:#000;font-weight:normal;transform:scaleX(0.955);transform-origin:center center;">1,646,732</div>
<div class="t sk" style="left:734.42px;width:400px;text-align:center;top:464.35px;height:17.20px;line-height:17.20px;font-size:8.60px;color:#000;font-weight:normal;transform:scaleX(0.955);transform-origin:center center;">1,250,439</div>
<div class="t sk" style="left:186.30px;top:477.12px;height:16.60px;line-height:16.60px;font-size:8.30px;color:#000;font-weight:normal;transform:scaleX(1.075);transform-origin:left center;">Net Profit Before Tax</div>
<div class="t sk" style="left:150.48px;width:400px;text-align:center;top:476.82px;height:17.20px;line-height:17.20px;font-size:8.60px;color:#000;font-weight:normal;transform:scaleX(0.955);transform-origin:center center;">4,533,941</div>
<div class="t sk" style="left:233.90px;width:400px;text-align:center;top:476.82px;height:17.20px;line-height:17.20px;font-size:8.60px;color:#000;font-weight:normal;transform:scaleX(0.955);transform-origin:center center;">6,451,875</div>
<div class="t sk" style="left:317.32px;width:400px;text-align:center;top:476.82px;height:17.20px;line-height:17.20px;font-size:8.60px;color:#000;font-weight:normal;transform:scaleX(0.955);transform-origin:center center;">7,186,791</div>
<div class="t sk" style="left:400.74px;width:400px;text-align:center;top:476.82px;height:17.20px;line-height:17.20px;font-size:8.60px;color:#000;font-weight:normal;transform:scaleX(0.955);transform-origin:center center;">10,562,262</div>
<div class="t sk" style="left:484.16px;width:400px;text-align:center;top:476.82px;height:17.20px;line-height:17.20px;font-size:8.60px;color:#000;font-weight:normal;transform:scaleX(0.955);transform-origin:center center;">11,992,809</div>
<div class="t sk" style="left:567.58px;width:400px;text-align:center;top:476.82px;height:17.20px;line-height:17.20px;font-size:8.60px;color:#000;font-weight:normal;transform:scaleX(0.955);transform-origin:center center;">11,971,975</div>
<div class="t sk" style="left:651.00px;width:400px;text-align:center;top:476.82px;height:17.20px;line-height:17.20px;font-size:8.60px;color:#000;font-weight:normal;transform:scaleX(0.955);transform-origin:center center;">11,989,561</div>
<div class="t sk" style="left:734.42px;width:400px;text-align:center;top:476.82px;height:17.20px;line-height:17.20px;font-size:8.60px;color:#000;font-weight:normal;transform:scaleX(0.955);transform-origin:center center;">12,026,652</div>
<div class="t sk" style="left:186.30px;top:489.59px;height:16.60px;line-height:16.60px;font-size:8.30px;color:#000;font-weight:normal;transform:scaleX(1.09);transform-origin:left center;">Net Profit After Tax</div>
<div class="t sk" style="left:150.48px;width:400px;text-align:center;top:489.29px;height:17.20px;line-height:17.20px;font-size:8.60px;color:#000;font-weight:normal;transform:scaleX(0.955);transform-origin:center center;">3,627,153</div>
<div class="t sk" style="left:233.90px;width:400px;text-align:center;top:489.29px;height:17.20px;line-height:17.20px;font-size:8.60px;color:#000;font-weight:normal;transform:scaleX(0.955);transform-origin:center center;">5,161,500</div>
<div class="t sk" style="left:317.32px;width:400px;text-align:center;top:489.29px;height:17.20px;line-height:17.20px;font-size:8.60px;color:#000;font-weight:normal;transform:scaleX(0.955);transform-origin:center center;">5,749,433</div>
<div class="t sk" style="left:400.74px;width:400px;text-align:center;top:489.29px;height:17.20px;line-height:17.20px;font-size:8.60px;color:#000;font-weight:normal;transform:scaleX(0.955);transform-origin:center center;">8,449,810</div>
<div class="t sk" style="left:484.16px;width:400px;text-align:center;top:489.29px;height:17.20px;line-height:17.20px;font-size:8.60px;color:#000;font-weight:normal;transform:scaleX(0.955);transform-origin:center center;">9,594,247</div>
<div class="t sk" style="left:567.58px;width:400px;text-align:center;top:489.29px;height:17.20px;line-height:17.20px;font-size:8.60px;color:#000;font-weight:normal;transform:scaleX(0.955);transform-origin:center center;">11,992,507</div>
<div class="t sk" style="left:651.00px;width:400px;text-align:center;top:489.29px;height:17.20px;line-height:17.20px;font-size:8.60px;color:#000;font-weight:normal;transform:scaleX(0.955);transform-origin:center center;">12,010,093</div>
<div class="t sk" style="left:734.42px;width:400px;text-align:center;top:489.29px;height:17.20px;line-height:17.20px;font-size:8.60px;color:#000;font-weight:normal;transform:scaleX(0.955);transform-origin:center center;">12,047,184</div>
<div class="b" style="left:309.07px;top:376.80px;width:677.93px;height:1.00px;background:#505050"></div>
<div class="b" style="left:309.07px;top:426.80px;width:677.93px;height:1.00px;background:#505050"></div>
<div class="b" style="left:309.07px;top:452.10px;width:677.93px;height:1.00px;background:#505050"></div>
<div class="b" style="left:309.07px;top:464.30px;width:677.93px;height:1.00px;background:#505050"></div>
<div class="b" style="left:309.07px;top:502.10px;width:677.93px;height:1.00px;background:#505050"></div>
<div class="b" style="left:987.20px;top:50.00px;width:12.80px;height:507.50px;background:#fafafa;border-left:1px solid #e3e3e3;box-sizing:border-box"></div>
<svg class="b" style="left:990px;top:54px" width="8" height="5" viewBox="0 0 8 5"><path d="M1.2 4.6 L4 1 L6.8 4.6 Z" fill="#5a5a5a"/></svg>
<div class="b" style="left:991.00px;top:62.00px;width:6.00px;height:473.60px;background:#6f6f6f;border-radius:3px"></div>
<svg class="b" style="left:990px;top:551.5px" width="8" height="5" viewBox="0 0 8 5"><path d="M1.2 0.4 L4 4 L6.8 0.4 Z" fill="#5a5a5a"/></svg>
<div class="b" style="left:0.00px;top:557.80px;width:1000.00px;height:18.50px;background:#e6e8eb"></div>
<div class="b" style="left:0.00px;top:557.80px;width:1000.00px;height:0.80px;background:#dadada"></div>
<svg class="b" style="left:15px;top:564px" width="8" height="10" viewBox="0 0 8 10"><path d="M6 1 L2 5 L6 9" fill="none" stroke="#7a7a7a" stroke-width="1.1"/></svg>
<svg class="b" style="left:35px;top:564px" width="8" height="10" viewBox="0 0 8 10"><path d="M2 1 L6 5 L2 9" fill="none" stroke="#9a9a9a" stroke-width="1.1"/></svg>
<div class="b" style="left:56.3px;top:567.8px;width:1.6px;height:1.6px;background:#333"></div><div class="b" style="left:59.3px;top:567.8px;width:1.6px;height:1.6px;background:#333"></div><div class="b" style="left:62.3px;top:567.8px;width:1.6px;height:1.6px;background:#333"></div>
<div class="b" style="left:73.00px;top:560.20px;width:41.70px;height:16.10px;background:#ffff99"></div>
<div class="t" style="left:73.00px;width:41.70px;text-align:center;top:561.9px;height:17px;line-height:17px;font-size:9.3px;transform:scaleX(0.93);color:#262626;white-space:nowrap;overflow:hidden">IS 2044</div>
<div class="t" style="left:121.00px;width:44.60px;text-align:center;top:561.9px;height:17px;line-height:17px;font-size:9.3px;transform:scaleX(0.93);color:#262626;white-space:nowrap;overflow:hidden">CF 2044</div>
<div class="t" style="left:171.00px;width:40.00px;text-align:center;top:561.9px;height:17px;line-height:17px;font-size:9.3px;transform:scaleX(0.93);color:#262626;white-space:nowrap;overflow:hidden">BS 2044</div>
<div class="t" style="left:221.00px;width:120.00px;text-align:center;top:561.9px;height:17px;line-height:17px;font-size:9.3px;transform:scaleX(0.93);color:#262626;white-space:nowrap;overflow:hidden">Statements Summary 2044</div>
<div class="b" style="left:348.00px;top:560.20px;width:60.80px;height:16.10px;background:#ffff99"></div>
<div class="t" style="left:348.00px;width:60.80px;text-align:center;top:561.9px;height:17px;line-height:17px;font-size:9.3px;transform:scaleX(0.93);color:#262626;white-space:nowrap;overflow:hidden">CAPEX 2044</div>
<div class="t" style="left:415.00px;width:99.00px;text-align:center;top:561.9px;height:17px;line-height:17px;font-size:9.3px;transform:scaleX(0.93);color:#262626;white-space:nowrap;overflow:hidden">Sales Summary Charts</div>
<div class="t" style="left:522.00px;width:87.00px;text-align:center;top:561.9px;height:17px;line-height:17px;font-size:9.3px;transform:scaleX(0.93);color:#262626;white-space:nowrap;overflow:hidden">Key Metrics Charts</div>
<div class="t" style="left:615.00px;width:36.00px;text-align:center;top:561.9px;height:17px;line-height:17px;font-size:9.3px;transform:scaleX(0.93);color:#262626;white-space:nowrap;overflow:hidden">Charts</div>
<div class="b" style="left:657.60px;top:558.30px;width:27.20px;height:18.00px;background:#ffffff"></div>
<div class="t" style="left:657.60px;width:27.20px;text-align:center;top:560.2px;height:17px;line-height:17px;font-size:9.3px;transform:scaleX(0.93);color:#262626;font-weight:bold;white-space:nowrap;overflow:hidden">BEA</div>
<div class="b" style="left:689.60px;top:560.20px;width:49.40px;height:16.10px;background:#ffff99"></div>
<div class="t" style="left:689.60px;width:49.40px;text-align:center;top:561.9px;height:17px;line-height:17px;font-size:9.3px;transform:scaleX(0.93);color:#262626;white-space:nowrap;overflow:hidden">Expenses</div>
<div class="b" style="left:744.00px;top:560.20px;width:89.60px;height:16.10px;background:#ffff99"></div>
<div class="t" style="left:744.00px;width:89.60px;text-align:center;top:561.9px;height:17px;line-height:17px;font-size:9.3px;transform:scaleX(0.93);color:#262626;white-space:nowrap;overflow:hidden">COGS Assumptions</div>
<div class="b" style="left:840.00px;top:560.20px;width:40.00px;height:16.10px;background:#ffff99"></div>
<div class="t" style="left:845.3px;top:561.9px;height:17px;line-height:17px;font-size:9.3px;transform:scaleX(0.93);transform-origin:left center;color:#262626">Salaries A</div>
<div class="b" style="left:663.20px;top:574.30px;width:16.00px;height:1.30px;background:#1f8a5e"></div>
<div class="b" style="left:880.00px;top:558.60px;width:120.00px;height:18.70px;background:#e6e8eb"></div>
<div class="b" style="left:886.5px;top:567.8px;width:1.6px;height:1.6px;background:#333"></div><div class="b" style="left:889.5px;top:567.8px;width:1.6px;height:1.6px;background:#333"></div><div class="b" style="left:892.5px;top:567.8px;width:1.6px;height:1.6px;background:#333"></div>
<svg class="b" style="left:905px;top:563px" width="10" height="10" viewBox="0 0 10 10"><path d="M5 1 L5 9 M1 5 L9 5" stroke="#333" stroke-width="1"/></svg>
<div class="b" style="left:931.3px;top:564px;width:1.3px;height:1.3px;background:#555"></div><div class="b" style="left:931.3px;top:567.5px;width:1.3px;height:1.3px;background:#555"></div><div class="b" style="left:931.3px;top:571px;width:1.3px;height:1.3px;background:#555"></div>
<svg class="b" style="left:945px;top:564px" width="5" height="8" viewBox="0 0 5 8"><path d="M4.5 0.5 L0.5 4 L4.5 7.5 Z" fill="#444"/></svg>
<div class="b" style="left:950.50px;top:565.50px;width:14.00px;height:5.00px;background:#555;border-radius:2.5px"></div>
<svg class="b" style="left:980px;top:564px" width="5" height="8" viewBox="0 0 5 8"><path d="M0.5 0.5 L4.5 4 L0.5 7.5 Z" fill="#444"/></svg>
<div class="b" style="left:0.00px;top:576.30px;width:1000.00px;height:14.70px;background:#f3f3f3"></div>
<div class="b" style="left:0.00px;top:576.30px;width:1000.00px;height:3.50px;background:#e9e9e9"></div>
<div class="b" style="left:0.00px;top:579.80px;width:1000.00px;height:2.20px;background:#fafafa"></div>
<div class="t " style="left:8.00px;top:580.10px;height:13.40px;line-height:13.40px;font-size:6.70px;color:#444;font-weight:normal;">Ready</div>
<svg class="b" style="left:39.5px;top:582px" width="9" height="9" viewBox="0 0 9 9"><rect x="0.5" y="0.5" width="8" height="8" fill="none" stroke="#555" stroke-width="1"/><rect x="2.5" y="2.5" width="4" height="4" fill="#777"/></svg>
<svg class="b" style="left:59px;top:582px" width="10" height="9" viewBox="0 0 10 9"><path d="M1 1 L9 1 M5 1 L5 4 M2 8 L5 4 L8 8" fill="none" stroke="#444" stroke-width="1"/></svg>
<div class="t " style="left:72.00px;top:579.90px;height:13.20px;line-height:13.20px;font-size:6.60px;color:#222;font-weight:bold;">Accessibility: Investigate</div>
<svg class="b" style="left:815px;top:581px" width="10" height="10" viewBox="0 0 10 10"><rect x="0.5" y="0.5" width="9" height="9" fill="none" stroke="#555" stroke-width="0.9"/><path d="M3.5 0.5 V9.5 M6.5 0.5 V9.5 M0.5 3.5 H9.5 M0.5 6.5 H9.5" stroke="#555" stroke-width="0.8"/></svg>
<svg class="b" style="left:841px;top:581.5px" width="10" height="10" viewBox="0 0 10 10"><rect x="0.5" y="0.5" width="9" height="9" fill="none" stroke="#555" stroke-width="0.9"/><rect x="2.5" y="1.5" width="5" height="7.5" fill="#888"/></svg>
<svg class="b" style="left:866px;top:581px" width="10" height="10" viewBox="0 0 10 10"><path d="M0.5 0.5 H9.5 V9.5 M0.5 0.5 V9.5 M0.5 5 H9.5 M5 0.5 V5" fill="none" stroke="#555" stroke-width="0.9"/></svg>
<div class="b" style="left:888.50px;top:584.80px;width:5.00px;height:0.80px;background:#666"></div>
<div class="b" style="left:895.00px;top:584.80px;width:67.00px;height:0.80px;background:#aaa"></div>
<div class="b" style="left:928.00px;top:581.50px;width:2.50px;height:7.00px;background:#555"></div>
<svg class="b" style="left:964px;top:582px" width="7" height="7" viewBox="0 0 7 7"><path d="M3.5 0.5 V6.5 M0.5 3.5 H6.5" stroke="#666" stroke-width="0.9"/></svg>
<div class="t " style="left:979.00px;top:579.60px;height:12.80px;line-height:12.80px;font-size:6.40px;color:#444;font-weight:normal;">100%</div>
</body></html>
